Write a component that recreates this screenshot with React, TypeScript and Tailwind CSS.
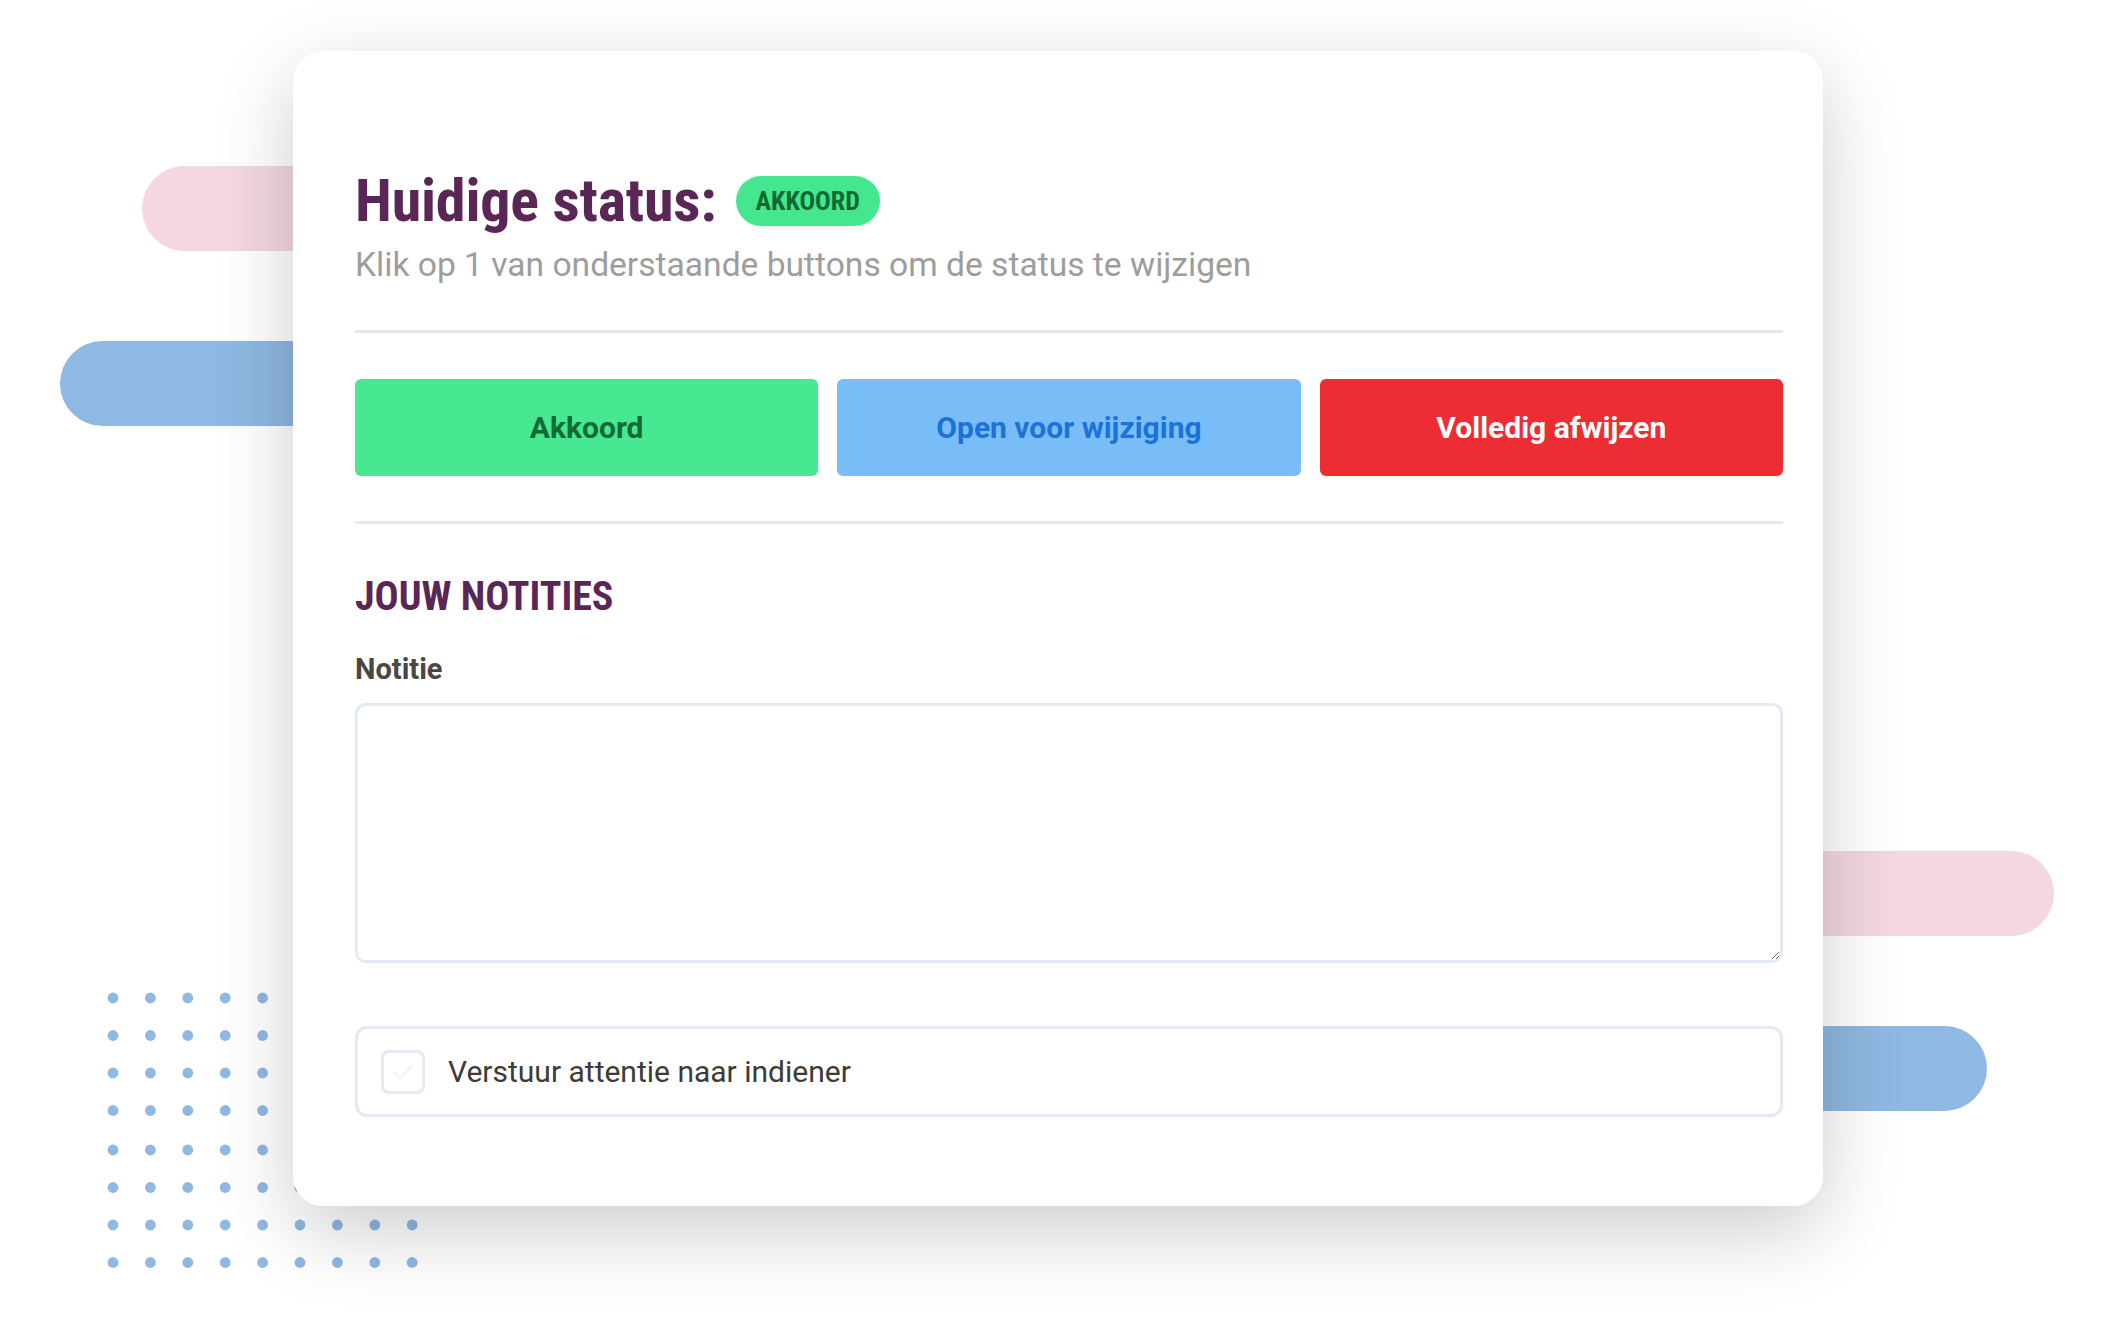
import React from "react";

const DOT_X = [113, 150.4, 187.8, 225.2, 262.6, 300, 337.4, 374.8, 412.2];
const DOT_Y = [998, 1035.5, 1073, 1110.5, 1150, 1187.5, 1225, 1262.5];

function Dots() {
  return (
    <svg
      className="absolute left-0 top-0"
      width={500}
      height={1319}
      viewBox="0 0 500 1319"
    >
      {DOT_Y.map((y) =>
        DOT_X.map((x) => (
          <circle key={`${x}-${y}`} cx={x} cy={y} r={5.4} fill="#8fb8e3" />
        ))
      )}
    </svg>
  );
}

export default function App() {
  return (
    <div className="relative w-[2117px] h-[1319px] overflow-hidden bg-white font-['Roboto',sans-serif]">
      {/* decorative background */}
      <div className="absolute left-[142px] top-[166px] h-[85px] w-[320px] rounded-full bg-[#f4d7df]" />
      <div className="absolute left-[60px] top-[341px] h-[85px] w-[400px] rounded-full bg-[#8fb8e2]" />
      <div className="absolute left-[1700px] top-[851px] h-[85px] w-[354px] rounded-full bg-[#f4d7df]" />
      <div className="absolute left-[1700px] top-[1026px] h-[85px] w-[287px] rounded-full bg-[#8fb8e2]" />
      <Dots />

      {/* card */}
      <div className="relative pt-[51px] pl-[293px]">
        <div className="w-[1530px] h-[1155px] rounded-[30px] bg-white shadow-[0_25px_80px_rgba(0,0,0,0.2)] pl-[62px] pr-[40px] pt-[120px]">
          <div className="flex items-center gap-[19px] h-[60px]">
            <h1 className="text-[60px] leading-[60px] font-bold text-[#5a2656] font-['Roboto_Condensed',Roboto,sans-serif] font-stretch-condensed tracking-[-0.2px]">
              Huidige status:
            </h1>
            <span className="inline-flex h-[50px] items-center rounded-full bg-[#45e690] px-[20px] text-[26px] font-bold text-[#10692f] font-['Roboto_Condensed',Roboto,sans-serif] font-stretch-condensed">
              AKKOORD
            </span>
          </div>
          <p className="mt-[13px] text-[33.6px] leading-[41px] text-[#9d9d9d]">
            Klik op 1 van onderstaande buttons om de status te wijzigen
          </p>

          <div className="mt-[45px] h-[3px] bg-[#e9e7ee]" />

          <div className="mt-[46px] grid grid-cols-3 gap-[19px]">
            <button className="h-[97px] rounded-[6px] bg-[#46e891] text-[30px] font-bold text-[#116a33]">
              Akkoord
            </button>
            <button className="h-[97px] rounded-[6px] bg-[#79bdf8] text-[30px] font-bold text-[#1b72d8]">
              Open voor wijziging
            </button>
            <button className="h-[97px] rounded-[6px] bg-[#ec2d34] text-[30px] font-bold text-white">
              Volledig afwijzen
            </button>
          </div>

          <div className="mt-[45px] h-[3px] bg-[#e9e7ee]" />

          <h2 className="mt-[53px] text-[40px] leading-[40px] font-bold text-[#5a2656] font-['Roboto_Condensed',Roboto,sans-serif] font-stretch-condensed">
            JOUW NOTITIES
          </h2>

          <label className="mt-[38px] block text-[29px] leading-[29px] font-bold text-[#4a4742]">
            Notitie
          </label>
          <textarea className="mt-[19px] block h-[260px] w-full rounded-[10px] border-[3px] border-[#e2ebf4] bg-white outline-none" />

          <div className="mt-[63px] flex h-[91px] items-center gap-[23px] rounded-[12px] border-[3px] border-[#e2ebf4] px-[23px]">
            <div className="flex h-[44px] w-[44px] items-center justify-center rounded-[8px] border-[3px] border-[#e2ebf4]">
              <svg width="26" height="26" viewBox="0 0 24 24" fill="none">
                <path
                  d="M4 12.5l5 5L20 6.5"
                  stroke="#eef2f6"
                  strokeWidth="2"
                  strokeLinecap="round"
                  strokeLinejoin="round"
                />
              </svg>
            </div>
            <span className="text-[30px] leading-[36px] text-[#3e3b36]">
              Verstuur attentie naar indiener
            </span>
          </div>
        </div>
      </div>
    </div>
  );
}
